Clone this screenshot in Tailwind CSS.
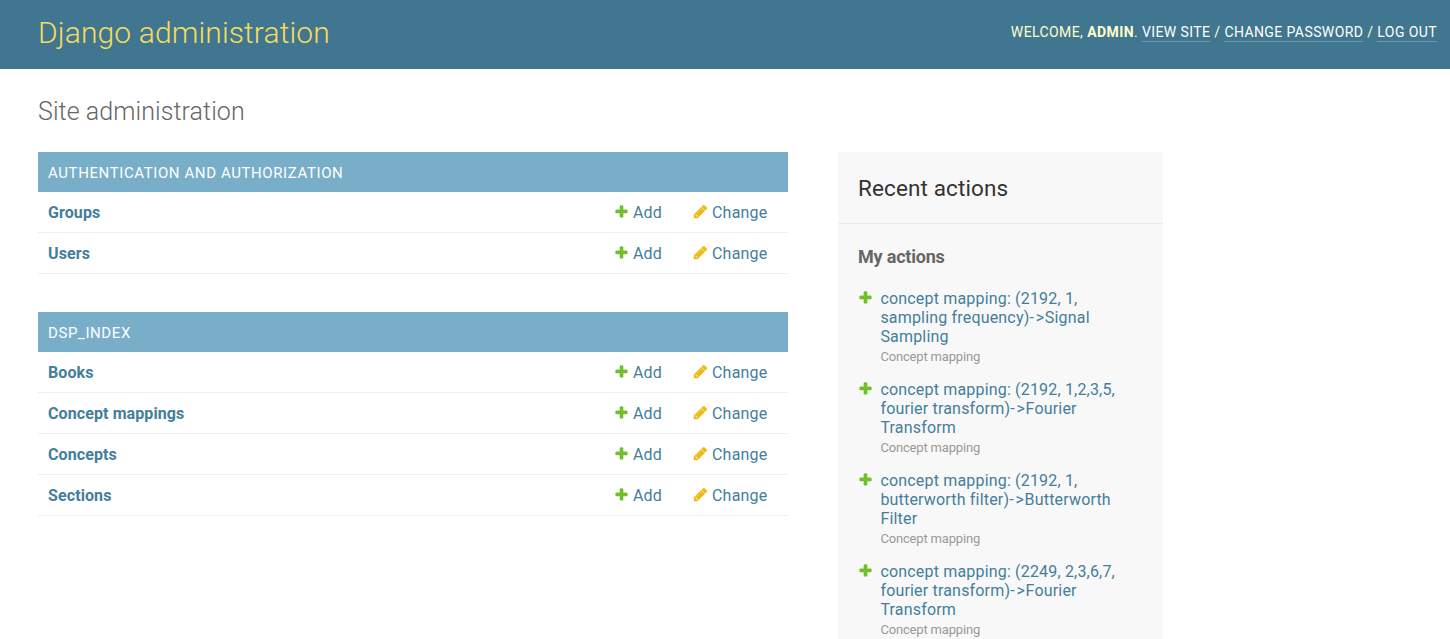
<!DOCTYPE html>
<html lang="en"><head><meta charset="utf-8"><title>Site administration</title>
<script src="https://cdn.jsdelivr.net/npm/@tailwindcss/browser@4"></script></head>
<body class="h-[639px] overflow-hidden bg-white font-['Roboto',sans-serif] text-[#447e9b]">
<svg class="hidden"><symbol id="plus" viewBox="0 0 1792 1792"><path fill="#70bf2b" stroke="#70bf2b" stroke-width="50" d="M1600 796v192q0 40-28 68t-68 28h-416v416q0 40-28 68t-68 28h-192q-40 0-68-28t-28-68v-416h-416q-40 0-68-28t-28-68v-192q0-40 28-68t68-28h416v-416q0-40 28-68t68-28h192q40 0 68 28t28 68v416h416q40 0 68 28t28 68z"/></symbol>
<symbol id="pencil" viewBox="0 0 1792 1792"><path fill="#efb80b" stroke="#efb80b" stroke-width="50" d="M491 1536l91-91-235-235-91 91v107h128v128h107zm523-928q0-22-22-22-10 0-17 7l-542 542q-7 7-7 17 0 22 22 22 10 0 17-7l542-542q7-7 7-17zm-54-192l416 416-832 832h-416v-416zm683 96q0 53-37 90l-166 166-416-416 166-165q36-38 90-38 53 0 91 38l235 234q37 39 37 91z"/></symbol></svg>
<header class="flex h-[69px] items-start justify-between bg-[#417690] pl-[38px] pr-[13px]">
<h1 class="pt-[13px] text-[30px] leading-[40px] font-light tracking-[0.12px] text-[#f5dd5d]">Django administration</h1>
<div class="pt-[24px] text-[14px] leading-[17px] tracking-[0.41px] whitespace-nowrap text-[#ffc]">WELCOME, <strong>ADMIN</strong>. <a class="inline-block border-b border-white/25 text-white">VIEW SITE</a> / <a class="inline-block border-b border-white/25 text-white">CHANGE PASSWORD</a> / <a class="inline-block border-b border-white/25 text-white">LOG OUT</a></div>
</header>
<main class="h-[570px] overflow-hidden pl-[38px]">
<h2 class="pt-[27px] text-[25px] leading-[32px] font-light tracking-[0.07px] text-[#666]">Site administration</h2>
<div class="mt-[24px] flex gap-[50px]">
<div id="modules" class="flex w-[750px] flex-col gap-[38px]"></div>
<aside class="h-[487px] w-[325px] bg-[#f8f8f8]">
<h2 class="h-[72px] border-b border-[#eaeaea] pt-[20px] pl-[20px] text-[22.5px] leading-[32px] tracking-[0.12px] text-[#333]">Recent actions</h2>
<h3 class="mt-[22px] pl-[20px] text-[18px] leading-[22px] font-bold tracking-[-0.2px] text-[#666]">My actions</h3>
<ul id="actions" class="mt-[21px] flex flex-col gap-[15px] pl-[20px]"></ul>
</aside></div></main>
<script>
const icon=(n,c)=>`<svg class="${c}"><use href="#${n}"/></svg>`;
document.getElementById('modules').innerHTML=[['AUTHENTICATION AND AUTHORIZATION',['Groups','Users']],['DSP_INDEX',['Books','Concept mappings','Concepts','Sections']]].map(([t,r])=>`<section><h2 class="h-[40px] bg-[#79aec8] pt-px pl-[10px] text-[15px] leading-[41px] tracking-[0.6px] text-white">${t}</h2>${r.map(x=>`<div class="flex h-[41px] border-b border-[#eee] pl-[10px] text-[16px] leading-[41px]"><strong class="w-[566px] tracking-[0.1px]">${x}</strong><a class="flex w-[78px] tracking-[0.1px]">${icon('plus','mt-[11.5px] mr-[4.5px] ml-[-0.5px] size-[15px]')}Add</a><a class="flex tracking-[0.2px]">${icon('pencil','mt-[11.5px] mr-[4.5px] ml-[0.5px] size-[15px]')}Change</a></div>`).join('')}</section>`).join('');
document.getElementById('actions').innerHTML=[['concept mapping: (2192, 1,','sampling frequency)->Signal','Sampling'],['concept mapping: (2192, 1,2,3,5,','fourier transform)->Fourier','Transform'],['concept mapping: (2192, 1,','butterworth filter)->Butterworth','Filter'],['concept mapping: (2249, 2,3,6,7,','fourier transform)->Fourier','Transform']].map(l=>`<li class="flex h-[76px]">${icon('plus','mt-[0.5px] mr-[7.4px] size-[15px] shrink-0')}<div class="text-[16px] leading-[19px] tracking-[0.18px] whitespace-nowrap">${l[0]}<br>${l[1].replace('->','<span class="tracking-[1.8px]">-</span><span class="tracking-[0.8px]">&gt;</span>')}<br>${l[2]}<div class="pt-[2px] text-[13px] leading-[17px] tracking-[-0.17px] text-[#999]">Concept mapping</div></div></li>`).join('');
</script></body></html>
